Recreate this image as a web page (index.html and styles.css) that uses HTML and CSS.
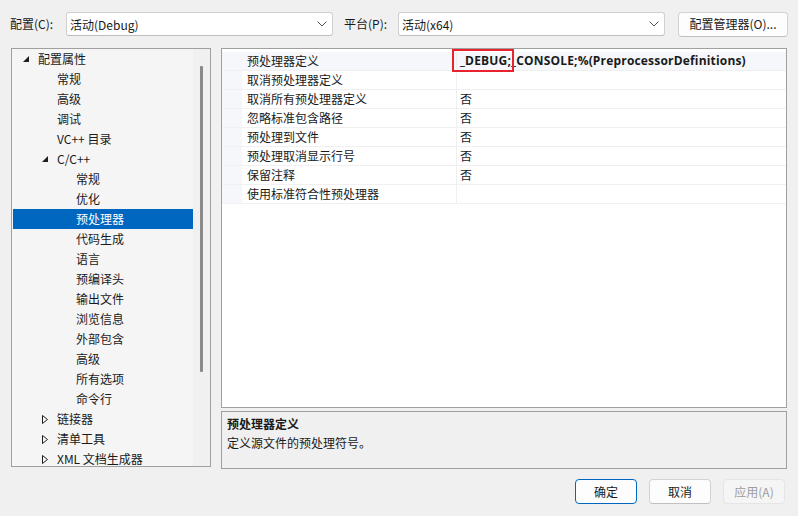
FILE: index.html
```html
<!DOCTYPE html>
<html lang="zh">
<head>
<meta charset="utf-8">
<link rel="stylesheet" href="styles.css">
</head>
<body>
<div class="dialog">
  <div class="toprow">
    <span class="lbl lbl-cfg">配置(C):</span>
    <div class="combo combo-cfg"><span>活动(Debug)</span><svg class="chev" width="10" height="6" viewBox="0 0 10 6"><path d="M0.5 0.5 L5 5 L9.5 0.5" fill="none" stroke="#555" stroke-width="1"/></svg></div>
    <span class="lbl lbl-plat">平台(P):</span>
    <div class="combo combo-plat"><span>活动(x64)</span><svg class="chev" width="10" height="6" viewBox="0 0 10 6"><path d="M0.5 0.5 L5 5 L9.5 0.5" fill="none" stroke="#555" stroke-width="1"/></svg></div>
    <button class="btn btn-mgr">配置管理器(O)...</button>
  </div>

  <div class="main">
    <div class="tree">
      <div class="tree-list">
        <div class="node l0"><svg class="tri" width="6" height="6" viewBox="0 0 6 6"><path d="M6 0 L6 6 L0 6 Z" fill="#1e1e1e"/></svg>配置属性</div>
        <div class="node l1">常规</div>
        <div class="node l1">高级</div>
        <div class="node l1">调试</div>
        <div class="node l1">VC++ 目录</div>
        <div class="node l1 exp"><svg class="tri" width="6" height="6" viewBox="0 0 6 6"><path d="M6 0 L6 6 L0 6 Z" fill="#1e1e1e"/></svg>C/C++</div>
        <div class="node l2">常规</div>
        <div class="node l2">优化</div>
        <div class="node l2 sel">预处理器</div>
        <div class="node l2">代码生成</div>
        <div class="node l2">语言</div>
        <div class="node l2">预编译头</div>
        <div class="node l2">输出文件</div>
        <div class="node l2">浏览信息</div>
        <div class="node l2">外部包含</div>
        <div class="node l2">高级</div>
        <div class="node l2">所有选项</div>
        <div class="node l2">命令行</div>
        <div class="node l1 col"><svg class="tri2" width="6" height="9" viewBox="0 0 6 9"><path d="M0.5 0.5 L5.5 4.5 L0.5 8.5 Z" fill="none" stroke="#1e1e1e" stroke-width="1"/></svg>链接器</div>
        <div class="node l1 col"><svg class="tri2" width="6" height="9" viewBox="0 0 6 9"><path d="M0.5 0.5 L5.5 4.5 L0.5 8.5 Z" fill="none" stroke="#1e1e1e" stroke-width="1"/></svg>清单工具</div>
        <div class="node l1 col"><svg class="tri2" width="6" height="9" viewBox="0 0 6 9"><path d="M0.5 0.5 L5.5 4.5 L0.5 8.5 Z" fill="none" stroke="#1e1e1e" stroke-width="1"/></svg>XML 文档生成器</div>
      </div>
      <div class="scroll"><div class="thumb"></div></div>
    </div>

    <div class="right">
      <div class="grid">
        <div class="row first"><div class="gut"></div><div class="name">预处理器定义</div><div class="val bold"><span class="mark">_DEBUG;</span>_CONSOLE;%(PreprocessorDefinitions)</div></div>
        <div class="row"><div class="gut"></div><div class="name">取消预处理器定义</div><div class="val"></div></div>
        <div class="row"><div class="gut"></div><div class="name">取消所有预处理器定义</div><div class="val">否</div></div>
        <div class="row"><div class="gut"></div><div class="name">忽略标准包含路径</div><div class="val">否</div></div>
        <div class="row"><div class="gut"></div><div class="name">预处理到文件</div><div class="val">否</div></div>
        <div class="row"><div class="gut"></div><div class="name">预处理取消显示行号</div><div class="val">否</div></div>
        <div class="row"><div class="gut"></div><div class="name">保留注释</div><div class="val">否</div></div>
        <div class="row"><div class="gut"></div><div class="name">使用标准符合性预处理器</div><div class="val"></div></div>
      </div>
      <div class="desc">
        <div class="desc-title">预处理器定义</div>
        <div class="desc-text">定义源文件的预处理符号。</div>
      </div>
    </div>
  </div>

  <div class="footer">
    <button class="btn btn-ok">确定</button>
    <button class="btn">取消</button>
    <button class="btn btn-dis">应用(A)</button>
  </div>
</div>
</body>
</html>
```

FILE: styles.css
```css
* { box-sizing: border-box; }
html, body { margin: 0; padding: 0; }
body {
  background: #f0f0f0;
  font-family: "Noto Sans CJK SC", "Noto Sans", sans-serif;
  font-size: 12px;
  color: #1a1a1a;
  width: 798px;
  height: 516px;
  overflow: hidden;
}
.dialog { width: 798px; height: 516px; position: relative; }

.toprow {
  display: flex;
  align-items: center;
  height: 26px;
  margin-top: 11px;
  padding-left: 10px;
}
.lbl { white-space: nowrap; line-height: 16px; }
.lbl-cfg { width: 56px; }
.lbl-plat { width: 54px; margin-left: 11px; }
.combo {
  height: 24px;
  background: #fff;
  border: 1px solid #d0d0d0;
  border-bottom-color: #bdbdbd;
  border-radius: 3px;
  display: flex;
  align-items: center;
  justify-content: space-between;
  padding: 0 5px 0 3px;
}
.combo-cfg { width: 267px; }
.combo-plat { width: 267px; }
.btn {
  font-family: inherit;
  font-size: 12px;
  color: #1a1a1a;
  background: #fdfdfd;
  border: 1px solid #d3d3d3;
  border-bottom-color: #c0c0c0;
  border-radius: 4px;
  height: 25px;
  padding: 0;
  line-height: 16px;
}
.btn-mgr { width: 110px; margin-left: 13px; }

.main {
  display: flex;
  margin-top: 11px;
  padding-left: 11px;
}
.tree {
  width: 200px;
  height: 419px;
  border: 1px solid #a0a0a0;
  background: #f5f5f5;
  display: flex;
}
.tree-list { flex: 1; background: #f5f5f5; }
.node {
  height: 20px;
  line-height: 20px;
  white-space: nowrap;
  position: relative;
  padding-left: 25px;
  margin-left: 1px;
}
.node.l1 { padding-left: 44px; }
.node.l2 { padding-left: 63px; }
.node.sel { background: #0067c0; color: #fff; }
.tri { position: absolute; left: 10px; top: 7px; }
.node.l1 .tri { left: 29px; }
.tri2 { position: absolute; left: 29px; top: 6px; }
.scroll {
  width: 17px;
  background: #f0f0f0;
  position: relative;
}
.thumb {
  position: absolute;
  left: 7px;
  top: 17px;
  width: 3px;
  height: 306px;
  background: #8a8a8a;
  border-radius: 1px;
}

.right {
  margin-left: 10px;
  width: 566px;
  display: flex;
  flex-direction: column;
  gap: 3px;
}
.grid {
  height: 360px;
  background: #fff;
  border: 1px solid #a0a0a0;
  padding-top: 3px;
}
.row {
  display: flex;
  height: 19px;
  border-bottom: 1px solid #f0f0f0;
}
.gut { width: 20px; background: #f5f7fb; }
.row.first { background: #f5f7fb; }
.name {
  width: 215px;
  padding-left: 5px;
  line-height: 18px;
  border-right: 1px solid #f0f0f0;
  white-space: nowrap;
}
.val {
  flex: 1;
  padding-left: 3px;
  line-height: 18px;
  white-space: nowrap;
}
.bold {
  font-family: "Open Sans", "Noto Sans", sans-serif;
  font-weight: 700;
  font-size: 12px;
  letter-spacing: 0.18px;
}
.mark { position: relative; }
.mark::after {
  content: "";
  position: absolute;
  left: -8px;
  right: -3px;
  top: -3px;
  bottom: -3px;
  border: 2px solid #e8232d;
}

.desc {
  height: 58px;
  border: 1px solid #a0a0a0;
  background: #f0f0f0;
  padding: 3px 0 0 5px;
}
.desc-title { font-weight: 700; line-height: 18px; }
.desc-text { line-height: 18px; margin-top: 1px; }

.footer {
  display: flex;
  justify-content: flex-end;
  gap: 12px;
  padding-right: 13px;
  margin-top: 10px;
}
.footer .btn { width: 62px; height: 25px; }
.btn-ok { border: 1px solid #0067c0; }
.btn-dis { color: #9d9d9d; background: #f5f5f5; border-color: #e5e5e5; }
```
